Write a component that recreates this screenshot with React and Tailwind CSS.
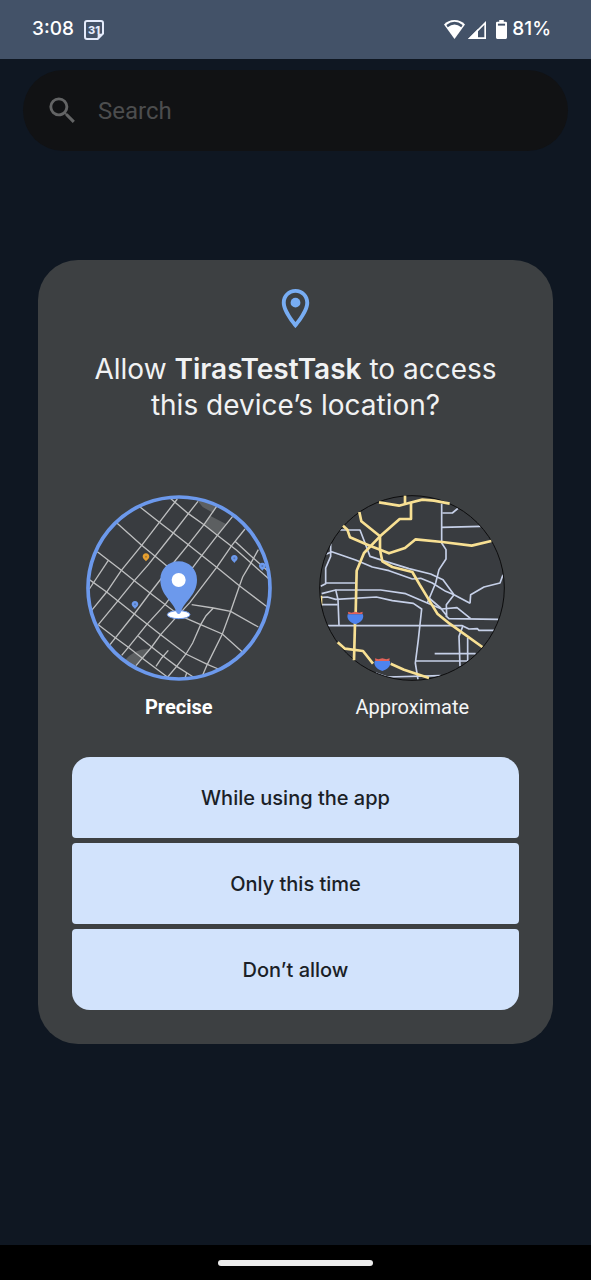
import { MdSearch, MdOutlineLocationOn } from "react-icons/md";

function StatusBar() {
  return (
    <header className="flex h-[59px] items-center justify-between bg-[#435268] pr-10 pl-8 text-[19px] font-medium text-white">
      <div className="flex items-center gap-2.5">
        <time>3:08</time>
        <svg viewBox="0 0 60 60" className="size-5" fill="none" aria-hidden="true">
          <path d="M9 3H51Q57 3 57 9V41L41 57H9Q3 57 3 51V9Q3 3 9 3Z" stroke="#e4ebfb" strokeWidth="6" />
          <path d="M41 57V41H57Z" fill="#e4ebfb" />
          <text x="30" y="42" textAnchor="middle" fontSize="33" fontWeight="800" fill="#e4ebfb">31</text>
        </svg>
      </div>
      <div className="flex items-center gap-[5px]">
        <div className="flex items-center gap-[3px]">
          <svg viewBox="0 0 62 56" className="h-[19px] w-[21px]" aria-hidden="true">
            <path d="M31 0C18 0 8 5 0 13L31 56L62 13C54 5 44 0 31 0Z" fill="#fff" />
            <path d="M7 15Q31-5 55 15L51 21Q31 5 11 21Z" fill="#435268" />
          </svg>
          <svg viewBox="0 0 54 54" className="size-[18px]" aria-hidden="true">
            <path d="M6 51.500H51.500V6Z" fill="none" stroke="#fff" strokeWidth="5" />
            <path d="M0 54L30 24V54Z" fill="#fff" />
          </svg>
          <svg viewBox="0 0 34 58" className="ml-[7px] h-[19px] w-[11px]" aria-hidden="true">
            <path d="M10 0H24V5H30Q34 5 34 9V54Q34 58 30 58H4Q0 58 0 54V9Q0 5 4 5H10Z" fill="#fff" />
            <path d="M6 11H28V17H6Z" fill="#435268" />
          </svg>
        </div>
        <span>81%</span>
      </div>
    </header>
  );
}

const STREETS = [
  "270,25 325,72 372,105 412,137 470,182 567,268",
  "465,155 512,198 567,247",
  "180,52 238,98 280,130 325,165 410,233 480,290 562,352",
  "108,98 185,167 240,212 300,262",
  "335,345 400,355 452,365 535,412",
  "52,186 124,242 163,273 210,310 262,350 300,378 362,405 427,433 487,487",
  "28,270 80,307 163,373 242,435 318,493 382,524 415,538",
  "55,405 100,440 145,473 190,508 262,562",
  "175,440 215,472 250,500 290,530 340,562",
  "292,28 238,98 185,167 124,242 80,307 35,362",
  "354,35 325,72 280,130 205,225 163,273 110,338 55,405",
  "410,50 372,105 325,165 280,220 210,310 163,373 90,465",
  "458,80 412,137 365,198 255,345 200,405 145,473 125,497",
  "495,118 455,168 410,233 330,338 285,387 242,435 215,472 168,528",
  "535,180 510,225 488,262 478,290 452,365 427,433 382,524 368,556",
  "400,355 378,378 362,405 338,460 318,493 290,530 263,562",
  "265,482 245,505 228,530",
  "85,212 28,298",
  "320,550 314,568",
];

function SmallPin({ x, y, color }) {
  return (
    <g transform={`translate(${x} ${y})`}>
      <path d="M0-10C6-10 10-6 10 0C10 6 3 9 0 14C-3 9-10 6-10 0C-10-6-6-10 0-10Z" fill={color} />
      <circle r="3" fill="#3a3d40" opacity="0.35" />
    </g>
  );
}

function PreciseMap() {
  return (
    <svg viewBox="18 16 558 558" className="size-[186px]" aria-hidden="true">
      <clipPath id="precise-clip">
        <circle cx="297" cy="295" r="274" />
      </clipPath>
      <g clipPath="url(#precise-clip)">
        <circle cx="297" cy="295" r="274" fill="#393c40" />
        <g fill="#5c5f61">
          <path d="M350 30L412 46L400 70L368 52Z" />
          <path d="M390 78L438 103L415 135L370 105Z" />
          <path d="M132 515Q162 476 208 478L168 530Z" />
        </g>
        <g fill="none" stroke="#bdbebf" strokeWidth="4">
          {STREETS.map((points) => (
            <polyline key={points} points={points} />
          ))}
        </g>
        <SmallPin x={198} y={201} color="#e8a02f" />
        <SmallPin x={463} y={206} color="#6c99ec" />
        <SmallPin x={165} y={344} color="#6c99ec" />
        <SmallPin x={547} y={229} color="#6c99ec" />
      </g>
      <circle cx="297" cy="295" r="273" fill="none" stroke="#6c99ec" strokeWidth="11" />
      <ellipse cx="296" cy="375" rx="34" ry="12" fill="#fff" stroke="#6c99ec" strokeWidth="3" />
      <path
        d="M296 215C327 215 351 239 351 270C351 318 311 334 302 369Q296 377 290 369C281 334 241 318 241 270C241 239 265 215 296 215Z"
        fill="#6c99ec"
      />
      <circle cx="296" cy="271" r="21" fill="#fff" />
    </svg>
  );
}

const ROADS = [
  "82,121 143,121 158,160 173,200 210,212 290,237 355,253 392,270 425,315 473,341",
  "38,195 58,186 130,211 180,232 230,243 300,268 325,266 360,280 400,305 425,315",
  "55,160 55,200 40,235 40,282 25,290",
  "40,280 130,280",
  "28,312 70,301 205,301 280,312 345,340 388,358 434,354 475,387",
  "28,323 45,322 70,329 192,322 240,333 303,341 328,358 318,450 309,520 317,570",
  "28,345 76,345",
  "70,300 77,330 80,408",
  "45,408 450,408 470,418 495,417 500,422 545,422",
  "388,42 388,160 401,180 401,208 380,240 370,280 345,340",
  "390,70 420,70 438,55",
  "388,113 505,110",
  "572,255 563,280 515,292 475,315 473,341",
  "425,315 402,345 403,378 385,355 350,325",
  "400,378 410,387 558,389",
  "452,408 440,440 443,530",
  "466,445 466,514 310,514",
  "367,492 490,492",
  "190,550 225,562 385,558",
];

const HIGHWAYS = [
  "200,38 260,48 290,40 330,30 365,33 412,42",
  "278,18 278,42",
  "296,40 296,88 262,88 203,140 155,190 133,243 130,370",
  "128,400 125,512",
  "141,67 147,95 203,140 203,180 210,215 240,232 300,247 322,285 375,372 412,402 510,472",
  "92,108 105,120 113,143 165,165 230,191 278,175 310,149 390,157 478,168 537,154",
  "76,458 98,477 152,484 182,522",
  "235,522 275,540 350,565",
];

function HighwayShield({ x, y }) {
  return (
    <g transform={`translate(${x} ${y})`}>
      <path d="M-22-18L-12-15L0-18L12-15L22-18L21-10H-21Z" fill="#e2635a" />
      <path d="M-23-10H23C27 6 15 15 0 20C-15 15-27 6-23-10Z" fill="#4e83ee" />
    </g>
  );
}

function ApproximateMap() {
  return (
    <svg viewBox="20 16 558 558" className="size-[186px]" aria-hidden="true">
      <clipPath id="approximate-clip">
        <circle cx="299" cy="295" r="277" />
      </clipPath>
      <g clipPath="url(#approximate-clip)">
        <circle cx="299" cy="295" r="277" fill="#393c40" />
        <g fill="none" stroke="#c6d0e8" strokeWidth="5" strokeLinejoin="round">
          {ROADS.map((points) => (
            <polyline key={points} points={points} />
          ))}
        </g>
        <path d="M27 318V347" stroke="#f8e093" strokeWidth="6" />
      </g>
      <circle cx="299" cy="295" r="277" fill="none" stroke="#0c0c0d" strokeWidth="3" />
      <g fill="none" stroke="#f8e093" strokeWidth="8" strokeLinejoin="round">
        {HIGHWAYS.map((points) => (
          <polyline key={points} points={points} />
        ))}
      </g>
      <HighwayShield x={129} y={384} />
      <HighwayShield x={210} y={524} />
    </svg>
  );
}

function AccuracyOption({ value, label, defaultChecked, children }) {
  return (
    <label className="flex cursor-pointer flex-col items-center gap-3.5 font-[Roboto,sans-serif] text-xl leading-6 text-[#f4f5f6]">
      <input type="radio" name="accuracy" value={value} defaultChecked={defaultChecked} className="peer sr-only" />
      {children}
      <span className="peer-checked:font-bold peer-checked:text-white">{label}</span>
    </label>
  );
}

function ActionButton({ children }) {
  return (
    <button
      type="button"
      className="h-[81px] w-full rounded-[4px] bg-[#d2e3fc] text-xl font-medium text-[#1b1f27] first:rounded-t-[18px] last:rounded-b-[18px]"
    >
      {children}
    </button>
  );
}

export default function App() {
  return (
    <div className="flex min-h-screen flex-col bg-[#0f1722] font-[Inter,sans-serif]">
      <StatusBar />
      <main className="relative flex-1 px-[23px] pt-[11px]">
        <label className="flex h-[81px] items-center gap-[18px] rounded-full bg-[#111214] pr-6 pl-[22px]">
          <MdSearch className="size-[35px] shrink-0 text-[#636465]" aria-hidden="true" />
          <input
            type="search"
            aria-label="Search"
            placeholder="Search"
            className="min-w-0 flex-1 bg-transparent font-[Roboto,sans-serif] text-2xl text-white outline-none placeholder:text-[#4c4d4e]"
          />
        </label>
        <div className="absolute inset-0 flex items-center px-[38px]">
          <section
            role="dialog"
            aria-labelledby="permission-title"
            className="flex w-full flex-col items-center rounded-[40px] bg-[#3d4042] px-[34px] pt-[25px] pb-[34px]"
          >
            <MdOutlineLocationOn className="size-[47px] text-[#78adf3]" aria-hidden="true" />
            <h1 id="permission-title" className="mt-[19px] text-center text-[28px] leading-9 text-[#f1f2f3]">
              Allow <b className="font-semibold">TirasTestTask</b> to access
              <br />
              this device’s location?
            </h1>
            <div className="mt-[72px] grid w-full grid-cols-2 gap-5">
              <AccuracyOption value="precise" label="Precise" defaultChecked>
                <PreciseMap />
              </AccuracyOption>
              <AccuracyOption value="approximate" label="Approximate">
                <ApproximateMap />
              </AccuracyOption>
            </div>
            <div className="mt-[38px] flex w-full flex-col gap-[5px]">
              <ActionButton>While using the app</ActionButton>
              <ActionButton>Only this time</ActionButton>
              <ActionButton>Don’t allow</ActionButton>
            </div>
          </section>
        </div>
      </main>
      <footer className="flex h-[35px] items-center justify-center bg-black">
        <div className="h-1.5 w-[155px] rounded-full bg-[#ececec]" />
      </footer>
    </div>
  );
}
